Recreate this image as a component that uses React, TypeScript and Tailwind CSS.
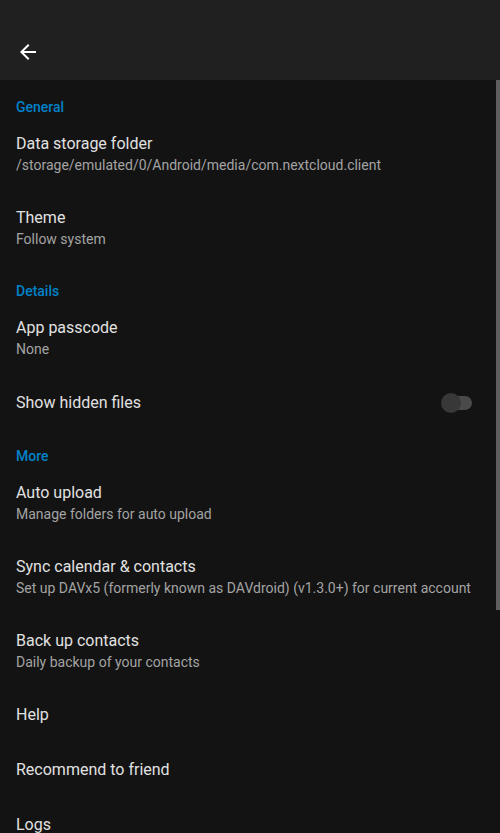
import React from "react";

const font = { fontFamily: "Roboto, 'Noto Sans', sans-serif" };

function Category({ label, first }: { label: string; first?: boolean }) {
  return (
    <div className={`pl-4 ${first ? "pt-[17px]" : "pt-4"} text-[14px] leading-[20px] font-medium text-[#0082c9]`}>{label}</div>
  );
}

function Item({ title, summary, h, children }: { title: string; summary?: string; h?: string; children?: React.ReactNode }) {
  return (
    <div className={`flex items-center pl-4 pr-7 py-4 ${h ?? ""}`}>
      <div className="flex-1 min-w-0">
        <div className="text-[16px] leading-[22px] text-[#e1e1e1] whitespace-nowrap">{title}</div>
        {summary && <div className="text-[14px] leading-[20px] text-[#a3a3a3] whitespace-nowrap">{summary}</div>}
      </div>
      {children}
    </div>
  );
}

export default function App() {
  return (
    <div className="relative w-[500px] h-[833px] overflow-hidden bg-[#131313]" style={font}>
      <div className="h-[80px] bg-[#202020] flex items-end pb-4 pl-4">
        <svg width="24" height="24" viewBox="0 0 24 24" fill="#ffffff">
          <path d="M20 11H7.83l5.59-5.59L12 4l-8 8 8 8 1.41-1.41L7.83 13H20v-2z" />
        </svg>
      </div>
      <Category label="General" first />
      <Item title="Data storage folder" summary="/storage/emulated/0/Android/media/com.nextcloud.client" />
      <Item title="Theme" summary="Follow system" />
      <Category label="Details" />
      <Item title="App passcode" summary="None" />
      <Item title="Show hidden files" h="min-h-[55px]">
        <div className="relative w-[31px] h-[20px] flex items-center">
          <div className="absolute left-[10px] w-[21px] h-[14px] rounded-full bg-[#4a4a4a]" />
          <div className="absolute left-0 w-[20px] h-[20px] rounded-full bg-[#383838]" />
        </div>
      </Item>
      <Category label="More" />
      <Item title="Auto upload" summary="Manage folders for auto upload" />
      <Item title="Sync calendar & contacts" summary="Set up DAVx5 (formerly known as DAVdroid) (v1.3.0+) for current account" />
      <Item title="Back up contacts" summary="Daily backup of your contacts" />
      <Item title="Help" />
      <Item title="Recommend to friend" h="min-h-[55px]" />
      <Item title="Logs" h="min-h-[55px]" />
      <div className="absolute right-0 top-[80px] w-[4px] h-[530px] bg-[#5e5e5e]" />
    </div>
  );
}
